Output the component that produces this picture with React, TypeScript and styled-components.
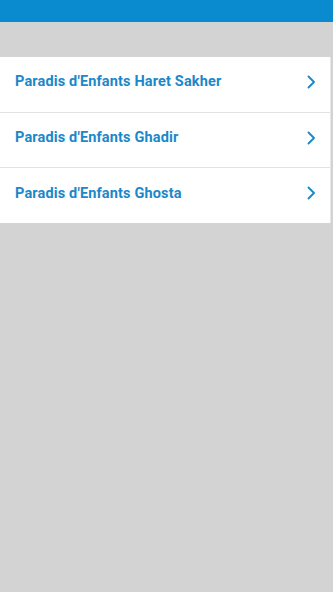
import React from "react";
import styled, { createGlobalStyle } from "styled-components";

const Global = createGlobalStyle`
  html, body { margin: 0; padding: 0; background: #d3d3d3; }
  body { font-family: Roboto, "Noto Sans", "Liberation Sans", sans-serif; }
`;

const Page = styled.div`
  min-height: 592px;
  background: #d3d3d3;
  display: flex;
  flex-direction: column;
`;

const TopBar = styled.div`
  height: 22px;
  background: #0a8bd0;
`;

const List = styled.ul`
  list-style: none;
  margin: 35px 0 0 0;
  padding: 0;
  width: 331px;
  background: #ffffff;
  border-right: 1px solid #e6e6e6;
  box-sizing: border-box;
`;

const Row = styled.li`
  height: 55px;
  display: flex;
  align-items: center;
  justify-content: space-between;
  padding: 0 14px 5px 15px;
  box-sizing: border-box;
  border-bottom: 1px solid #e2e2e2;
  &:first-child { height: 56px; padding-bottom: 6px; }
  &:last-child { border-bottom: none; }
`;

const Label = styled.span`
  font-size: 14.5px;
  font-weight: 700;
  color: #1a88c9;
  letter-spacing: 0.15px;
`;

const Chevron = () => (
  <svg width="10" height="14" viewBox="0 0 10 14" fill="none">
    <path d="M2.5 1.5 L8 7 L2.5 12.5" stroke="#1a88c9" strokeWidth="1.9" strokeLinecap="round" strokeLinejoin="round" />
  </svg>
);

const items = [
  "Paradis d'Enfants Haret Sakher",
  "Paradis d'Enfants Ghadir",
  "Paradis d'Enfants Ghosta",
];

export default function App() {
  return (
    <Page>
      <Global />
      <TopBar />
      <List>
        {items.map((t) => (
          <Row key={t}>
            <Label>{t}</Label>
            <Chevron />
          </Row>
        ))}
      </List>
    </Page>
  );
}
